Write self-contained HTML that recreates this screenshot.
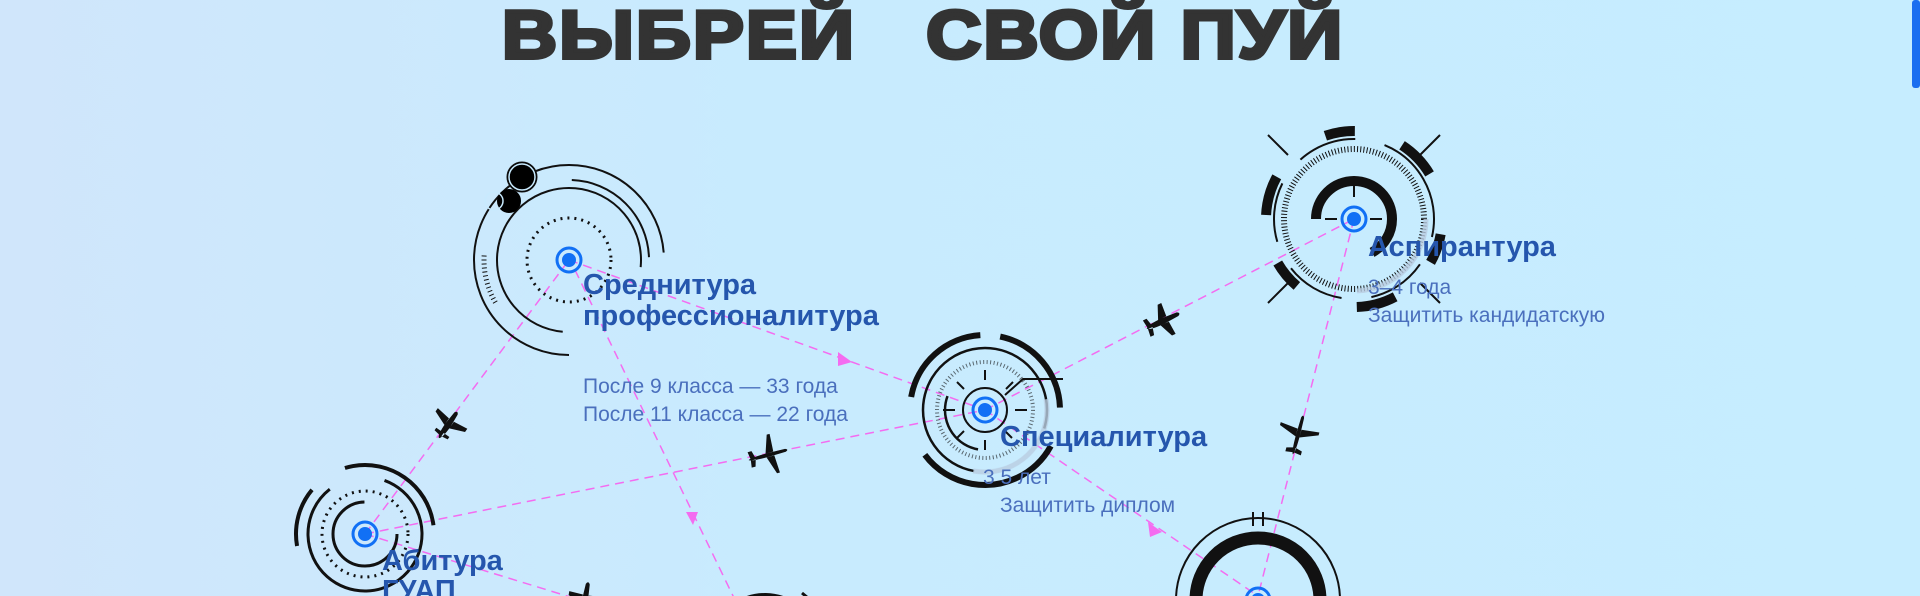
<!DOCTYPE html>
<html><head><meta charset="utf-8">
<style>
html,body{margin:0;padding:0;width:1920px;height:596px;overflow:hidden}
body{background:linear-gradient(90deg,#d0e6fb 0%,#c8ebfe 40%,#c6edff 100%);position:relative;font-family:"Liberation Sans","Noto Sans CJK SC",sans-serif}
.title{position:absolute;left:502px;top:0px;height:70px;font-weight:900;font-size:68px;color:#333;letter-spacing:2px;white-space:nowrap;line-height:70px;-webkit-text-stroke:4px #333}
.t{position:absolute;color:#2556ad;font-weight:bold;font-size:29px;line-height:31px;white-space:nowrap}
.s{position:absolute;color:#4a6fbd;font-size:21px;line-height:28px;white-space:nowrap}
.sb{position:absolute;right:0;top:0;width:8px;height:88px;background:#1a6ef0;border-radius:3px}
</style></head><body>
<div class="title"><span style="display:inline-block;transform:scaleX(1.12);transform-origin:0 0">ВЫБРЕЙ&nbsp;&nbsp;&nbsp;СВОЙ&nbsp;ПУЙ</span></div>
<svg width="1920" height="596" style="position:absolute;left:0;top:0">
<g stroke="#f46cf0" stroke-width="1.5" stroke-dasharray="9 6" fill="none">
<line x1="365" y1="534" x2="569" y2="260"/>
<line x1="365" y1="534" x2="985" y2="410"/>
<line x1="569" y1="260" x2="985" y2="410"/>
<line x1="575" y1="270" x2="735" y2="600"/>
<line x1="985" y1="410" x2="1354" y2="219"/>
<line x1="985" y1="410" x2="1258" y2="596"/>
<line x1="1354" y1="219" x2="1258" y2="596"/>
<line x1="365" y1="534" x2="580" y2="600"/>
</g>
<g fill="#f46cf0">
<polygon points="838,352 852,362 838,366"/>
<polygon points="686,512 698,512 693,525"/>
<polygon points="1148,522 1162,532 1150,537"/>
</g>
<g fill="none" stroke="#111">
<circle cx="569" cy="260" r="72" stroke-width="2" stroke-dasharray="340 200" transform="rotate(95 569 260)"/>
<circle cx="569" cy="260" r="95" stroke-width="2" stroke-dasharray="440 160" transform="rotate(90 569 260)"/>
<circle cx="569" cy="260" r="80" stroke-width="2" stroke-dasharray="120 400" transform="rotate(-88 569 260)"/>
<circle cx="569" cy="260" r="42" stroke-width="3" stroke-dasharray="2 5"/>
<circle cx="569" cy="260" r="85" stroke-width="5" transform="rotate(150 569 260)" style="stroke-dasharray:1 3 1 3 1 3 1 3 1 3 1 3 1 3 1 3 1 3 1 3 1 3 1 3 1 520"/>
<circle cx="509" cy="201" r="11" fill="#000" stroke="#000" stroke-width="2"/>
<circle cx="522" cy="177" r="15" fill="#000"/>
<circle cx="522" cy="177" r="13" stroke="#c8eafe" stroke-width="1.5"/>
<circle cx="494" cy="201" r="9" stroke="#c8eafe" stroke-width="1.5" fill="none"/>
<circle cx="365" cy="534" r="32" stroke-width="3" stroke-dasharray="150 60"/>
<circle cx="365" cy="534" r="43" stroke-width="3" stroke-dasharray="2 5"/>
<circle cx="365" cy="534" r="57" stroke-width="3" stroke-dasharray="300 60" transform="rotate(-70 365 534)"/>
<circle cx="365" cy="534" r="69" stroke-width="4" stroke-dasharray="60 40 120 300" transform="rotate(170 365 534)"/>
<circle cx="985" cy="410" r="75" stroke-width="6" stroke-dasharray="100 20 100 40 150 300" transform="rotate(190 985 410)"/>
<circle cx="985" cy="410" r="62" stroke-width="2.5" stroke-dasharray="300 100" transform="rotate(100 985 410)"/>
<circle cx="985" cy="410" r="48" stroke-width="4" stroke-dasharray="1 2.5" stroke-opacity=".6" />
<circle cx="985" cy="410" r="40" stroke-width="2.5" stroke-dasharray="70 200" transform="rotate(100 985 410)"/>
<circle cx="985" cy="410" r="22" stroke-width="2"/>
<path d="M985 380v-10M985 440v10M955 410h-12M1015 410h12M964 389l-7-7M964 431l-7 7M1006 389l7-7M1005 431l7 7M1005 395l18-16h40" stroke-width="2"/>
<circle cx="1354" cy="219" r="80" stroke-width="2" stroke-dasharray="60 30" transform="rotate(-30 1354 219)"/>
<circle cx="1354" cy="219" r="88" stroke-width="10" stroke-dasharray="30 50 40 65" transform="rotate(10 1354 219)"/>
<circle cx="1354" cy="219" r="70" stroke-width="6" stroke-dasharray="1 2.2"/>
<circle cx="1354" cy="219" r="38" stroke-width="10" stroke-dasharray="160 80" transform="rotate(-180 1354 219)"/>
<path d="M1354 185v12M1325 219h12M1370 219h12M1268 135l20 20M1440 135l-20 20M1268 303l20-20M1440 303l-20-20" stroke-width="2"/>
<circle cx="1258" cy="600" r="82" stroke-width="2"/>
<circle cx="1258" cy="600" r="62" stroke-width="13"/>
<path d="M1253 512v14M1263 512v14" stroke-width="2"/>
<circle cx="765" cy="650" r="55" stroke-width="4" stroke-dasharray="40 300" transform="rotate(250 765 650)"/>
<path d="M802 593l12 10" stroke-width="3"/>
</g>
<g fill="none" stroke="#b9cde2" stroke-width="5" opacity=".8">
<circle cx="985" cy="410" r="62" stroke-dasharray="120 400" transform="rotate(-10 985 410)"/>
<circle cx="1354" cy="219" r="72" stroke-dasharray="110 400"/>
</g>
<g fill="#1170f5">
<circle cx="569" cy="260" r="7"/><circle cx="365" cy="534" r="7"/><circle cx="985" cy="410" r="7"/><circle cx="1354" cy="219" r="7"/><circle cx="1258" cy="600" r="7"/>
</g>
<g fill="none" stroke="#1170f5" stroke-width="3">
<circle cx="569" cy="260" r="12"/><circle cx="365" cy="534" r="12"/><circle cx="985" cy="410" r="12"/><circle cx="1354" cy="219" r="12"/><circle cx="1258" cy="600" r="12"/>
</g>
<g fill="#111">
<g transform="translate(448,425) rotate(-55)"><path d="M-16 0 Q-14 -3 0 -3 L14 -2 Q18 0 14 2 L0 3 Q-14 3 -16 0Z M-2 -3 L4 -18 L8 -18 L6 -3Z M-2 3 L4 18 L8 18 L6 3Z M-13 -1 L-12 -8 L-9 -8 L-9 -1Z M-13 1 L-12 8 L-9 8 L-9 1Z"/></g>
<g transform="translate(768,455) rotate(-15)"><path d="M-20 0 Q-18 -2 0 -2 L18 -1.5 Q22 0 18 1.5 L0 2 Q-18 2 -20 0Z M-2 -2 L4 -20 L7 -20 L6 -2Z M-2 2 L4 20 L7 20 L6 2Z M-18 -1 L-19 -8 L-15 -8 L-13 -1Z M-18 1 L-19 8 L-15 8 L-13 1Z"/></g>
<g transform="translate(1163,321) rotate(-25)"><path d="M-18 0 Q-16 -3 0 -3 L16 -2 Q20 0 16 2 L0 3 Q-16 3 -18 0Z M-4 -3 L2 -17 L6 -17 L5 -3Z M-4 3 L2 17 L6 17 L5 3Z M-17 -1 L-18 -9 L-14 -9 L-12 -1Z M-17 1 L-18 9 L-14 9 L-12 1Z"/></g>
<g transform="translate(1298,435) rotate(-75)"><path d="M-20 0 Q-18 -2 0 -2 L18 -1.5 Q22 0 18 1.5 L0 2 Q-18 2 -20 0Z M-2 -2 L5 -20 L8 -20 L6 -2Z M-2 2 L5 20 L8 20 L6 2Z M-18 -1 L-19 -8 L-15 -8 L-13 -1Z M-18 1 L-19 8 L-15 8 L-13 1Z"/></g>
<g transform="translate(585,600) rotate(-80)"><path d="M-18 0 Q-16 -3 0 -3 L16 -2 Q20 0 16 2 L0 3 Q-16 3 -18 0Z M-4 -3 L2 -17 L6 -17 L5 -3Z M-4 3 L2 17 L6 17 L5 3Z"/></g>
</g>
</svg>
<div class="t" style="left:583px;top:270px">Среднитура<br>профессионалитура</div>
<div class="s" style="left:583px;top:373px">После 9 класса — 33 года<br>После 11 класса — 22 года</div>
<div class="t" style="left:382px;top:546px">Абитура</div>
<div class="t" style="left:382px;top:576px">ГУАП</div>
<div class="t" style="left:1000px;top:422px">Специалитура</div>
<div class="s" style="left:983px;top:464px">3 5 лет</div>
<div class="s" style="left:1000px;top:492px">Защитить диплом</div>
<div class="t" style="left:1368px;top:232px">Аспирантура</div>
<div class="s" style="left:1368px;top:274px">3–4 года<br>Защитить кандидатскую</div>
<div class="sb"></div>
</body></html>
